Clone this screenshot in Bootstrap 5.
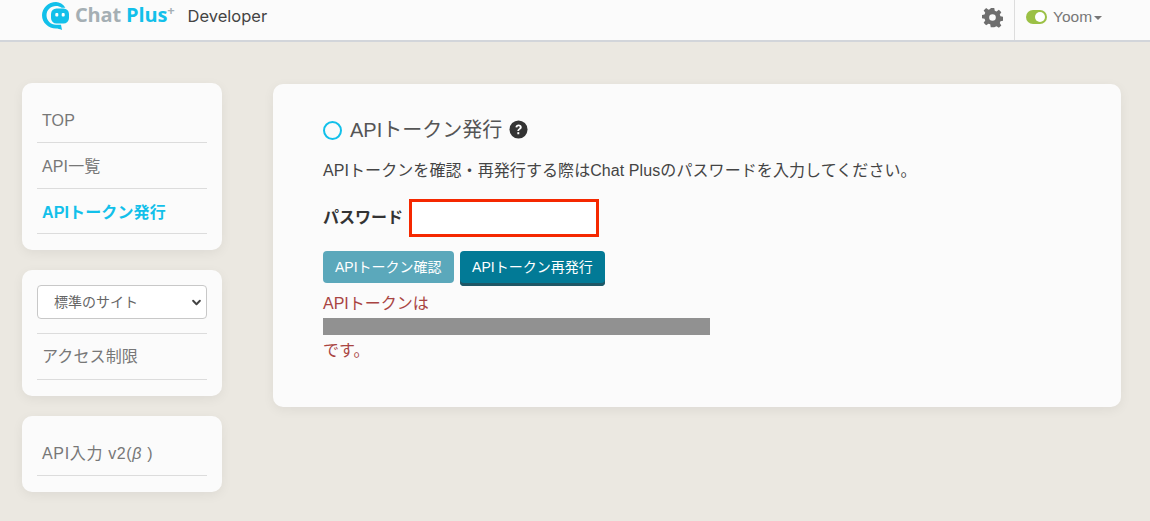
<!DOCTYPE html>
<html lang="ja">
<head>
<meta charset="utf-8">
<title>Chat Plus Developer</title>
<link rel="stylesheet" href="https://cdn.jsdelivr.net/npm/bootstrap@5.3.0/dist/css/bootstrap.min.css">
<style>
html,body{height:521px;overflow:hidden}
body{background:#ebe8e1;font-family:"Liberation Sans","Noto Sans CJK JP",sans-serif;color:#333;font-size:14px}
.topbar{height:42px;background:#fbfbfb;border-bottom:2px solid #d2d5da}
.logo-wrap{margin-left:41px;margin-bottom:10px;height:30px}
.logo-word{font-family:"Open Sans","Liberation Sans",sans-serif;font-weight:700;font-size:20px;line-height:30px;color:#a5afb4;margin-left:5px;letter-spacing:-.15px}
.logo-word b{color:#12c0ea;font-weight:700}
.logo-word sup{color:#a5afb4;font-size:13px;top:-.55em}
.dev-name{font-size:16.500px;color:#444;margin-left:13px;line-height:30px;font-family:"Inter","Liberation Sans",sans-serif;padding-top:2px}
.user-box{width:136px;height:40px;border-left:1px solid #ddd;padding-left:11px;padding-bottom:6px;color:#777;font-size:15.500px}
.gear-slot{margin-right:11px;margin-bottom:6px;height:21px}
.toggle-pill{width:21px;height:14px;border-radius:7px;background:#9bc045;position:relative;margin-right:6px}
.toggle-pill::after{content:"";position:absolute;right:2px;top:2px;width:10px;height:10px;border-radius:50%;background:#fff}
.caret-mini{border-top:4px solid #777;border-left:4px solid transparent;border-right:4px solid transparent;margin-left:2px;margin-top:2px}
.page-body{padding:41px 29px 0 22px;gap:51px}
.side-col{width:200px}
.panel-box{background:#fbfbfb;border-radius:10px;box-shadow:0 3px 12px rgba(0,0,0,.06)}
.side-panel{padding:14px 15px 16px;margin-bottom:20px}
.side-link{display:block;height:46px;line-height:47px;border-bottom:1px solid #dcdcdc;color:#777;font-size:16px;padding-left:5px;text-decoration:none;letter-spacing:.12px}
.side-link.on{color:#12c0ea;font-weight:700;height:45px}
.beta-link{letter-spacing:.65px}
.site-pick{height:34px;font-size:14px;color:#666;padding:0 16px;background-size:11px 9px;background-position:right 4px center;background-image:url("data:image/svg+xml,%3csvg xmlns='http://www.w3.org/2000/svg' viewBox='0 0 16 16'%3e%3cpath fill='none' stroke='%23444' stroke-linecap='round' stroke-linejoin='round' stroke-width='3.500' d='m2 5 6 6 6-6'/%3e%3c/svg%3e");border-color:#c8c8c8;border-radius:4px;background-color:#fff;font-family:inherit}
.pick-row{height:49px;border-bottom:1px solid #dcdcdc;margin-top:1px}
.access-link{line-height:46px}
.main-panel{flex:1;height:323px;margin-top:1px;padding:35px 50px}
.ring-mark{width:19px;height:19px;border:2px solid #12c0ea;border-radius:50%;margin-right:8px}
.head-line{font-size:20px;color:#555;line-height:22px;margin-bottom:19px}
.help-icon{margin-left:7px;margin-top:-1px}
.intro-line{font-size:16px;color:#444;line-height:22px;margin-bottom:17px;letter-spacing:.08px}
.pw-label{font-size:16px;font-weight:700;color:#333;margin-right:6px}
.pw-field{width:190px;height:38px;border:3px solid #f52800;background:#fff;border-radius:0;padding:4px}
.pw-field:focus{outline:0;box-shadow:none;border-color:#f52800}
.btn-row{margin-top:14px;gap:6px}
.act-btn{font-size:14px;color:#fff;height:32px;line-height:20px;padding:5px 12px;border:0;border-radius:4px}
.act-pale{background:#5ba8bb;margin-bottom:3px}
.act-deep{background:#027a96;height:35px;box-shadow:inset 0 -3px 0 #1f5766;padding:5px 12.500px 8px}
.act-pale:hover,.act-pale:active{background:#5ba8bb!important;color:#fff!important}
.act-deep:hover,.act-deep:active{background:#027a96!important;color:#fff!important}
.msg-box{color:#a94442;font-size:16px;line-height:22px;margin-top:7px}
.mask-bar{width:387px;height:17px;background:#919191;margin-top:3px;margin-bottom:5px}
</style>
</head>
<body>
<header class="topbar d-flex align-items-center justify-content-between">
  <div class="logo-wrap d-flex align-items-center">
    <svg width="29" height="29" viewBox="0 0 29 29" aria-hidden="true">
      <path d="M15 1C7.300 1 1 7 1 14.300S7.300 27.500 15 27.500c2 0 3.600.5 6 1.500l-1-5.200h-5c-5.300 0-9.500-4.200-9.500-9.500S9.700 5 15 5c2.100 0 4 .6 5.600 1.700h3.800C22 3.100 18.800 1 15 1z" fill="#12c0ea"/>
      <rect x="10" y="7.500" width="18" height="15" rx="5.500" fill="#12c0ea"/>
      <rect x="14.300" y="12" width="3" height="3.400" rx="1" fill="#fff"/><rect x="20.700" y="12" width="3" height="3.400" rx="1" fill="#fff"/>
    </svg>
    <span class="logo-word">Chat <b>Plus</b><sup>+</sup></span>
    <span class="dev-name">Developer</span>
  </div>
  <div class="d-flex align-items-center">
    <div class="gear-slot d-flex">
      <svg width="21" height="21" viewBox="0 0 24 24" aria-hidden="true"><path fill="#6e6e6e" fill-rule="evenodd" d="M10 1h4l.6 3.200 2 .8 2.700-1.800 2.800 2.800-1.800 2.700.8 2 3.200.6v4.400l-3.200.6-.8 2 1.800 2.700-2.800 2.800-2.700-1.800-2 .8L14 23h-4l-.6-3.200-2-.8-2.700 1.800-2.800-2.800 1.800-2.700-.8-2-3.200-.6V9.300l3.200-.6.8-2-1.800-2.700 2.800-2.800 2.700 1.800 2-.8zM12 8.200a3.800 3.800 0 1 0 0 7.600 3.800 3.800 0 0 0 0-7.600z"/></svg>
    </div>
    <div class="user-box d-flex align-items-center">
      <span class="toggle-pill"></span><span>Yoom</span><span class="caret-mini"></span>
    </div>
  </div>
</header>
<main class="page-body d-flex align-items-start">
  <aside class="side-col">
    <nav class="panel-box side-panel">
      <a class="side-link" href="#">TOP</a>
      <a class="side-link" href="#">API一覧</a>
      <a class="side-link on" href="#">APIトークン発行</a>
    </nav>
    <div class="panel-box side-panel">
      <div class="pick-row">
        <select class="form-select site-pick"><option>標準のサイト</option></select>
      </div>
      <a class="side-link access-link" href="#">アクセス制限</a>
    </div>
    <div class="panel-box side-panel">
      <a class="side-link beta-link" href="#">API入力 v2(<i>β</i> )</a>
    </div>
  </aside>
  <section class="panel-box main-panel">
    <div class="head-line d-flex align-items-center">
      <span class="ring-mark"></span><span>APIトークン発行</span>
      <svg class="help-icon" width="19" height="19" viewBox="0 0 20 20" aria-hidden="true"><circle cx="10" cy="10" r="9.500" fill="#333"/><path d="M6.800 7.600C7 5.700 8.300 4.700 10.100 4.700c1.900 0 3.300 1.100 3.300 2.800 0 1.300-.8 2-1.700 2.600-.7.500-1 .8-1 1.600H8.800c0-1.400.5-2 1.400-2.600.7-.5 1.100-.8 1.100-1.400 0-.7-.5-1.100-1.200-1.100-.8 0-1.200.5-1.300 1.200z" fill="#fff"/><rect x="8.800" y="12.800" width="2" height="2.200" fill="#fff"/></svg>
    </div>
    <p class="intro-line">APIトークンを確認・再発行する際はChat Plusのパスワードを入力してください。</p>
    <div class="d-flex align-items-center">
      <label class="pw-label" for="pw">パスワード</label>
      <input id="pw" class="form-control pw-field" type="password">
    </div>
    <div class="btn-row d-flex align-items-start">
      <button class="btn act-btn act-pale" type="button">APIトークン確認</button>
      <button class="btn act-btn act-deep" type="button">APIトークン再発行</button>
    </div>
    <div class="msg-box">
      <div>APIトークンは</div>
      <div class="mask-bar"></div>
      <div>です。</div>
    </div>
  </section>
</main>
<script src="https://cdn.jsdelivr.net/npm/bootstrap@5.3.0/dist/js/bootstrap.bundle.min.js"></script>
</body>
</html>
